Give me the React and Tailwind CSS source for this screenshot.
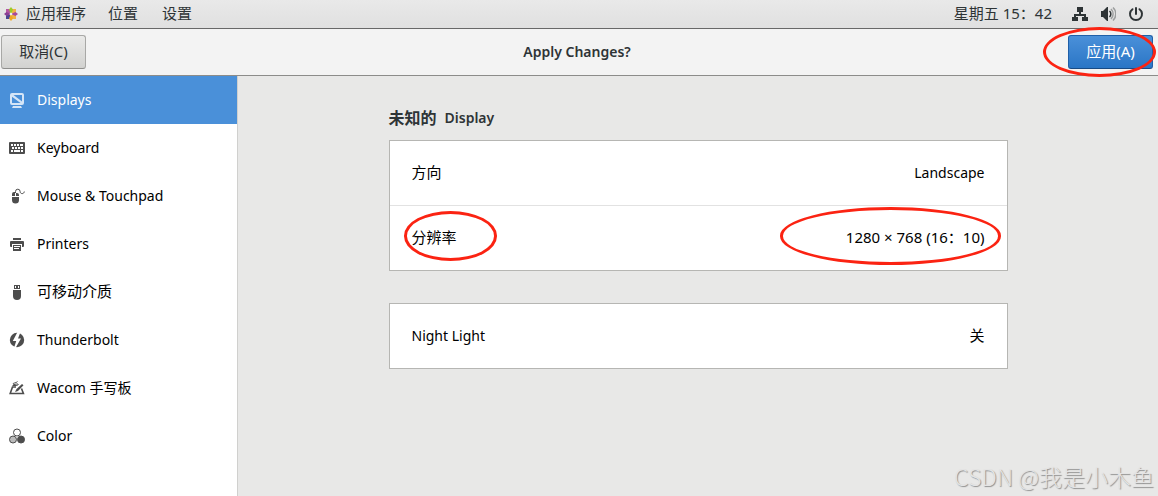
import React from "react";

function DisplaysIcon() {
  return (
    <svg viewBox="0 0 16 16" className="size-4 shrink-0" fill="currentColor" aria-hidden="true">
      <path fillRule="evenodd" d="M3 1h10a2 2 0 0 1 2 2v8a2 2 0 0 1-2 2H3a2 2 0 0 1-2-2V3a2 2 0 0 1 2-2zm0 2v8h10V3z" />
      <path d="M3 3h1.500L13 9.500V11h-1.500L3 4.800z" />
      <path d="M4 14h8l1 2H3z" />
    </svg>
  );
}

function KeyboardIcon() {
  return (
    <svg viewBox="0 0 16 16" className="size-4 shrink-0" aria-hidden="true">
      <rect y="2" width="16" height="12" rx="1" fill="currentColor" />
      <path
        fill="#fff"
        d="M2 4h2v2H2zM5 4h2v2H5zM8 4h2v2H8zM11 4h3v2h-3zM3 7h2v2H3zM6 7h2v2H6zM9 7h2v2H9zM12 7h2v2h-2zM2 10h2v2H2zM5 10h6v2H5zM12 10h2v2h-2z"
      />
    </svg>
  );
}

function MouseIcon() {
  return (
    <svg viewBox="0 0 16 16" className="size-4 shrink-0" aria-hidden="true">
      <path fill="currentColor" d="M3 9h7v3a3.500 3.500 0 0 1-7 0zM3 8V6a2 2 0 0 1 2-2h1v4zM7 5h1a2 2 0 0 1 2 2v1H7z" />
      <path fill="none" stroke="currentColor" d="M6.500 5V3.500a2.300 2.300 0 0 1 4.600 0c0 2.800 4 2.800 4.200 0" />
    </svg>
  );
}

function PrinterIcon() {
  return (
    <svg viewBox="0 0 16 16" className="size-4 shrink-0" fill="currentColor" aria-hidden="true">
      <path d="M4 2h8v2H4zM2 5h12a1 1 0 0 1 1 1v4a1 1 0 0 1-1 1h-1V8H3v3H2a1 1 0 0 1-1-1V6a1 1 0 0 1 1-1z" />
      <path fillRule="evenodd" d="M4 9h8v6H4zm1 1v1h6v-1zm0 2v1h5v-1z" />
    </svg>
  );
}

function MediaIcon() {
  return (
    <svg viewBox="0 0 16 16" className="size-4 shrink-0" fill="currentColor" aria-hidden="true">
      <path fillRule="evenodd" d="M5 1h6v4H5zm1 1v2h1V2zm3 0v2h1V2z" />
      <path d="M4 6h8v6a4 4 0 0 1-8 0z" />
    </svg>
  );
}

function ThunderboltIcon() {
  return (
    <svg viewBox="0 0 16 16" className="size-4 shrink-0" aria-hidden="true">
      <circle cx="8" cy="8" r="7.200" fill="currentColor" />
      <path fill="#fff" d="M8.500 0 3.800 9h3.400L5 16h1.500L12 6.500H9L11.500 0z" />
    </svg>
  );
}

function TabletIcon() {
  return (
    <svg viewBox="0 0 16 16" className="size-4 shrink-0" aria-hidden="true">
      <path fill="none" stroke="currentColor" strokeWidth="1.600" d="M7 7H3.500L1.200 13.500h13.200L12.500 8.500" />
      <path fill="none" stroke="currentColor" d="M8.500 1.500C7 3.500 4 2.500 4 4s4-.5 5 0-.5 1.500-2 1.500H3.500" />
      <path fill="currentColor" d="m6 12 1.500-3L13 4l1.500 1.200L9 11z" />
    </svg>
  );
}

function ColorIcon() {
  return (
    <svg viewBox="0 0 16 16" className="size-4 shrink-0" stroke="currentColor" aria-hidden="true">
      <circle cx="8" cy="4.500" r="3.500" fill="#fff" />
      <circle cx="4" cy="11.500" r="3.500" fill="#bbb" />
      <circle cx="12" cy="11.500" r="3.500" fill="currentColor" />
    </svg>
  );
}

function DistroLogo() {
  return (
    <svg viewBox="0 0 14 14" className="size-3.5" aria-hidden="true">
      <path fill="#b5579f" d="M2 2h4v4H2z" />
      <path fill="#efb244" d="M8 2h4v4H8zM8 8h4v4H8z" />
      <path fill="#4a4690" d="M2 8h4v4H2z" />
      <path fill="#9ccd2a" d="M7 0l2 2.500L7.500 6h-1L5 2.500z" />
      <path fill="#a64a9c" d="M14 7l-2.500 2L8 7.500v-1L11.500 5z" />
      <path fill="#efa724" d="M7 14l-2-2.500L6.500 8h1L9 11.500z" />
      <path fill="#8a3f92" d="M0 7l2.500-2L6 6.500v1L2.500 9z" />
      <path fill="#efefef" d="M6 6h2v2H6z" />
    </svg>
  );
}

function NetworkIcon() {
  return (
    <svg viewBox="0 0 16 16" className="size-4" fill="currentColor" aria-hidden="true">
      <path d="M5 1h6v5H9v2h5v3h2v4h-6v-4h2v-1H4v1h2v4H0v-4h2V8h5V6H5z" />
    </svg>
  );
}

function VolumeIcon() {
  return (
    <svg viewBox="0 0 16 16" className="size-4" aria-hidden="true">
      <path fill="currentColor" d="M1 5h2l4-4h1v14H7l-4-4H1z" />
      <path fill="none" stroke="currentColor" strokeWidth="1.500" d="M9.500 5a4 4 0 0 1 0 6" />
      <path fill="none" stroke="#9c9e9e" strokeWidth="1.500" d="M11 3a7 7 0 0 1 0 10M13 1.500a9 9 0 0 1 0 13" />
    </svg>
  );
}

function PowerIcon() {
  return (
    <svg viewBox="0 0 16 16" className="size-4" fill="none" stroke="currentColor" strokeWidth="2" strokeLinecap="round" aria-hidden="true">
      <path d="M8 2v6M4.500 3.200a6 6 0 1 0 7 0" />
    </svg>
  );
}

function Ring({ className }) {
  return (
    <span aria-hidden="true" className={"pointer-events-none absolute rounded-[50%] border-3 border-[#fb2312] " + className} />
  );
}

const panels = [
  { label: "Displays", Icon: DisplaysIcon, active: true },
  { label: "Keyboard", Icon: KeyboardIcon },
  { label: "Mouse & Touchpad", Icon: MouseIcon },
  { label: "Printers", Icon: PrinterIcon },
  { label: "可移动介质", Icon: MediaIcon, wide: true },
  { label: "Thunderbolt", Icon: ThunderboltIcon },
  { label: "Wacom 手写板", Icon: TabletIcon },
  { label: "Color", Icon: ColorIcon },
];

function TopBar() {
  return (
    <div className="flex h-[29px] items-center justify-between border-b border-[#686868] bg-linear-to-b from-[#e9e9e9] to-[#e0e0e0] pr-3.5 pl-1 text-[15px] text-[#2e3436]">
      <nav className="flex items-center gap-[22px]">
        <button type="button" className="flex items-center gap-2">
          <DistroLogo />
          应用程序
        </button>
        <button type="button">位置</button>
        <button type="button" className="ml-0.5">设置</button>
      </nav>
      <div className="flex items-center gap-5">
        <button type="button" className="whitespace-pre">星期五 15：42</button>
        <button type="button" aria-label="System" className="flex items-center gap-3">
          <NetworkIcon />
          <VolumeIcon />
          <PowerIcon />
        </button>
      </div>
    </div>
  );
}

function HeaderBar() {
  return (
    <header className="grid h-[47px] grid-cols-[1fr_auto_1fr] items-center border-b border-[#8c8c8a] bg-[#f3f3f3] pr-[5px] pl-px text-[#2e3436]">
      <button
        type="button"
        className="h-[34px] w-[85px] justify-self-start rounded-[3px] border border-[#a8a8a6] border-b-[#8e8e8c] bg-linear-to-b from-[#e9e9e8] to-[#d2d2d0] text-[15px]"
      >
        取消(C)
      </button>
      <h1 className="text-sm font-semibold">Apply Changes?</h1>
      <div className="relative justify-self-end">
        <button
          type="button"
          className="block h-[34px] w-[85px] rounded-[3px] border border-[#1f5fa8] border-b-[#184b85] bg-linear-to-b from-[#4a90d9] to-[#2a76c6] text-[15px] text-white"
        >
          应用(A)
        </button>
        <Ring className="-inset-y-2 -right-[3px] -left-[25px]" />
      </div>
    </header>
  );
}

function Sidebar() {
  return (
    <nav className="w-[238px] shrink-0 border-r border-[#d0d0ce] bg-white">
      <ul>
        {panels.map(({ label, Icon, active, wide }) => (
          <li key={label} className={wide ? "text-[15px]" : "text-sm"}>
            <a
              href="#"
              aria-current={active ? "page" : undefined}
              className={
                active
                  ? "flex h-12 items-center gap-3 bg-[#4a90d9] px-[9px] text-white"
                  : "flex h-12 items-center gap-3 px-[9px] text-black"
              }
            >
              <span className={active ? "text-[#d5e5f7]" : "text-[#4d4d4d]"}>
                <Icon />
              </span>
              {label}
            </a>
          </li>
        ))}
      </ul>
    </nav>
  );
}

function Row({ label, value, ringed, labelSize = "text-[15px]", valueSize = "text-[15px]" }) {
  return (
    <li>
      <button type="button" className="flex h-16 w-full items-center justify-between px-[22px] text-left">
        <span className={"relative " + labelSize}>
          {label}
          {ringed && <Ring className="-top-4 -right-10 -bottom-3 -left-2" />}
        </span>
        <span className={"relative " + valueSize}>
          {value}
          {ringed && <Ring className="-top-5 -right-4 -bottom-4 -left-[66px]" />}
        </span>
      </button>
    </li>
  );
}

export default function App() {
  return (
    <div className="flex min-h-screen flex-col bg-[#e8e8e7] font-['Noto_Sans','Noto_Sans_CJK_SC',sans-serif] text-sm text-black">
      <TopBar />
      <HeaderBar />
      <div className="flex flex-1">
        <Sidebar />
        <main className="relative flex-1 px-6 pt-8">
          <div className="mx-auto max-w-[619px]">
            <h2 className="mb-3 flex h-5 items-center gap-2 font-semibold text-[#2e3436]">
              <span className="text-base">未知的</span>
              <span>Display</span>
            </h2>
            <ul className="divide-y divide-[#e2e2e2] border border-[#b6b6b3] bg-white">
              <Row label="方向" value="Landscape" valueSize="text-sm" />
              <Row label="分辨率" value="1280 × 768 (16：10)" ringed />
            </ul>
            <ul className="mt-8 border border-[#b6b6b3] bg-white">
              <Row label="Night Light" labelSize="text-sm" value="关" />
            </ul>
          </div>
          <p className="absolute right-1 bottom-1 font-['Noto_Sans_CJK_SC',sans-serif] text-[23px] leading-8 font-light text-[#e4e4e4] [text-shadow:1px_1px_1px_#8f8f8f]">
            CSDN @我是小木鱼
          </p>
        </main>
      </div>
    </div>
  );
}
